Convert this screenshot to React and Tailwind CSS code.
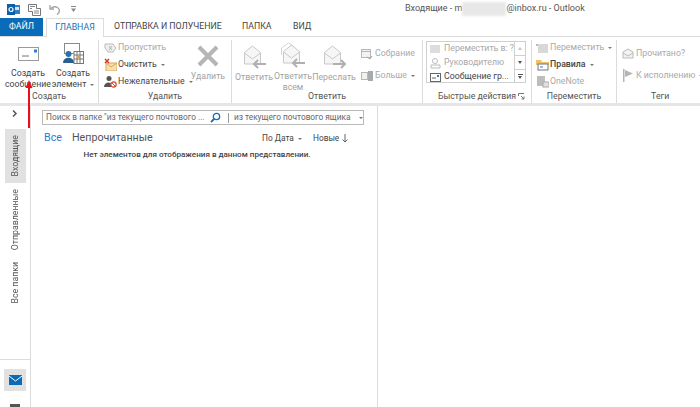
import React from 'react';

const EnvelopeOpen = ({ arrow = 'left', double = false }) => (
    <svg width="26" height="28" viewBox="0 0 26 28" fill="none">
        {double && <path d="M1.500 13V6l7-5 5 3" stroke="#d4d4d4" />}
        <path d="M3.500 9.500 11.500 3l8 6.500V21h-16z" fill="#f6f6f6" stroke="#c8c8c8" />
        <path d="M3.500 10l8 6 8-6" stroke="#c8c8c8" />
        {arrow === 'left' ? (
            <path d="M25 21H13M17 17l-4 4 4 4" stroke="#b0b0b0" strokeWidth="2" />
        ) : (
            <path d="M12 21h12M20 17l4 4-4 4" stroke="#b0b0b0" strokeWidth="2" />
        )}
    </svg>
);

const Caret = ({ className = '' }) => <span className={`inline-block ml-1 align-middle border-x-[2px] border-t-[2px] border-x-transparent border-t-[#777] ${className}`} />;

const SmallRow = ({ icon, label, caret, muted }) => (
    <div className={`flex items-center h-[17px] whitespace-nowrap ${muted ? 'text-[#a9a9a9]' : 'text-[#444]'}`}>
        <span className="flex w-[14px] h-[14px] shrink-0 items-center justify-start">{icon}</span>
        <span>{label}</span>
        {caret && <Caret />}
    </div>
);

const Group = ({ label, className, children, launcher }) => (
    <div className={`relative flex flex-col h-full shrink-0 border-r border-[#dcdcdc] ${className}`}>
        <div className="flex-1 flex min-h-0">{children}</div>
        <div className="h-[13px] leading-[13px] text-center text-[#555]">{label}</div>
        {launcher && (
            <svg className="absolute right-[6px] bottom-[3px]" width="7" height="7" viewBox="0 0 7 7" fill="none">
                <path d="M.5 3V.5H6M3 3l3 3M6 3.500V6H3.500" stroke="#777" />
            </svg>
        )}
    </div>
);

const BigButton = ({ icon, lines, muted, className = '' }) => (
    <div className={`flex flex-col items-center shrink-0 ${muted ? 'text-[#a3a3a3]' : 'text-[#444]'} ${className}`}>
        <div className="h-[29px] flex items-center justify-center">{icon}</div>
        <div className="leading-[12px] text-center whitespace-nowrap">{lines[0]}</div>
        <div className="leading-[11px] text-center whitespace-nowrap">{lines[1]}</div>
    </div>
);

const SideTab = ({ label, active, className = '' }) => (
    <div className={`flex items-center justify-center w-[21px] ${active ? 'bg-[#e1e1e1]' : ''} ${className}`}>
        <span className="[writing-mode:vertical-rl] rotate-180 whitespace-nowrap text-[#555]">{label}</span>
    </div>
);

export default function App() {
    return (
        <div className="w-[700px] h-[407px] overflow-hidden bg-white relative font-['Roboto',sans-serif] text-[8.75px] text-[#444] flex flex-col">
            {/* Title bar */}
            <div className="h-[18px] flex items-center shrink-0">
                <div className="w-[405px] flex items-center gap-[8px] pl-[7px]">
                    <svg width="13" height="13" viewBox="0 0 13 13">
                        <rect x="5" y="2" width="8" height="9" fill="#2f7fc4" />
                        <rect x="0" y="1" width="8" height="11" fill="#0f5fa8" />
                        <circle cx="4" cy="6.500" r="2" fill="none" stroke="#fff" strokeWidth="1.200" />
                        <path d="M8 4h4v3H8z" fill="#cfe4f5" />
                    </svg>
                    <svg width="13" height="13" viewBox="0 0 13 13" fill="none">
                        <path d="M.5 1.500h8v4h4v7h-8v-4h-4z" fill="#fff" stroke="#777" />
                        <path d="M2 3.500h5M2 5.500h2M6 8h5M6 10h5" stroke="#888" />
                    </svg>
                    <svg width="11" height="11" viewBox="0 0 11 11" fill="none">
                        <path d="M1 1v4h4M1.500 5C3 2.500 8 1.500 10 5c1 2.500-.5 4.500-2 5.500" stroke="#a6a6a6" strokeWidth="1.300" />
                    </svg>
                    <svg className="ml-[3px]" width="5" height="6" viewBox="0 0 5 6">
                        <path d="M0 0h5v1H0zM0 2.500h5L2.500 6z" fill="#888" />
                    </svg>
                </div>
                <div className="h-[18px] flex items-center text-[9px] text-[#555] whitespace-nowrap">
                    <span>Входящие - m</span>
                    <span className="w-[44px] h-[14px] bg-[#e8e8e8] blur-[1px]" />
                    <span>@inbox.ru - Outlook</span>
                </div>
            </div>

            {/* Tabs */}
            <div className="h-[18px] flex items-stretch shrink-0 text-[#444] relative z-10">
                <div className="w-[43px] bg-[#0a6cb8] text-white flex items-center justify-center">ФАЙЛ</div>
                <div className="w-[58px] ml-[3px] h-[19px] bg-white border border-b-0 border-[#dcdcdc] text-[#1d6fb4] flex items-center justify-center">ГЛАВНАЯ</div>
                <div className="w-[128px] ml-[10px] flex items-center whitespace-nowrap">ОТПРАВКА И ПОЛУЧЕНИЕ</div>
                <div className="w-[51px] flex items-center">ПАПКА</div>
                <div className="flex items-center">ВИД</div>
            </div>

            {/* Ribbon */}
            <div className="h-[67px] flex shrink-0 border-t border-[#dcdcdc] pt-[3px]">
                <Group label="Создать" className="w-[99px]">
                    <div className="flex pl-[3px]">
                        <BigButton
                            className="w-[50px] pt-[1px]"
                            lines={['Создать', 'сообщение']}
                            icon={
                                <svg width="24" height="18" viewBox="0 0 24 18" fill="none">
                                    <rect x="2.500" y="2.500" width="20" height="13" fill="#fff" stroke="#9a9a9a" />
                                    <path d="M6 11h7" stroke="#777" />
                                    <rect x="18" y="4.500" width="3" height="3" fill="#2b7cd3" />
                                </svg>
                            }
                        />
                        <BigButton
                            className="w-[40px] pt-[1px]"
                            lines={['Создать', <>элемент<Caret /></>]}
                            icon={
                                <svg width="22" height="22" viewBox="0 0 22 22" fill="none">
                                    <rect x="2.500" y=".5" width="15" height="10" fill="#fff" stroke="#8a8a8a" />
                                    <rect x="12" y="8.500" width="9.500" height="12" fill="#fff" stroke="#777" />
                                    <path d="M12 12h10M12 16h10M15 9v12M18 9v12" stroke="#777" />
                                    <rect x="15.500" y="12.500" width="2.500" height="3" fill="#e59a3c" />
                                    <circle cx="6.500" cy="11" r="3" fill="#2f6fa8" />
                                    <path d="M1 20c0-7 11-7 11 0z" fill="#2c5f8f" />
                                </svg>
                            }
                        />
                    </div>
                </Group>
                <Group label="Удалить" className="w-[133px]">
                    <div className="flex flex-col pl-[5px] -mt-[1px] w-[91px]">
                        <SmallRow
                            muted
                            label="Пропустить"
                            icon={
                                <svg width="13" height="13" viewBox="0 0 13 13" fill="none">
                                    <path d="M1 3h8l3 4-3 4H4L1 7z" fill="#f0f0f0" stroke="#b9b9b9" />
                                    <path d="M5 5l3 4M8 5 5 9" stroke="#b0b0b0" />
                                </svg>
                            }
                        />
                        <SmallRow
                            label="Очистить"
                            caret
                            icon={
                                <svg width="13" height="13" viewBox="0 0 13 13" fill="none">
                                    <rect x="2" y="5" width="11" height="8" fill="#f7dfb0" stroke="#d8a95c" />
                                    <path d="M1 1l4 4M5 1 1 5" stroke="#d13a2a" strokeWidth="1.500" />
                                    <path d="M2 5l5 4 6-4" stroke="#d8a95c" />
                                </svg>
                            }
                        />
                        <SmallRow
                            label="Нежелательные"
                            caret
                            icon={
                                <svg width="13" height="13" viewBox="0 0 13 13" fill="none">
                                    <circle cx="5" cy="3.500" r="2.500" fill="#555" />
                                    <path d="M0 12c0-6 9-6 9 0z" fill="#555" />
                                    <circle cx="9.500" cy="9.500" r="2.700" fill="#fff" stroke="#d8452f" strokeWidth="1.200" />
                                    <path d="M7.500 7.500l4 4" stroke="#d8452f" />
                                </svg>
                            }
                        />
                    </div>
                    <BigButton
                        muted
                        className="w-[36px] pt-[1px]"
                        lines={['Удалить', '']}
                        icon={
                            <svg width="24" height="24" viewBox="0 0 24 24" fill="none">
                                <path d="M3 3l18 18M21 3 3 21" stroke="#b5b5b5" strokeWidth="4" />
                            </svg>
                        }
                    />
                </Group>
                <Group label="Ответить" className="w-[191px]">
                    <div className="flex pl-[3px] pt-[2px] shrink-0">
                        <BigButton muted className="w-[38px]" lines={['Ответить', '']} icon={<EnvelopeOpen />} />
                        <BigButton muted className="w-[40px]" lines={['Ответить', 'всем']} icon={<EnvelopeOpen double />} />
                        <BigButton muted className="w-[42px]" lines={['Переслать', '']} icon={<EnvelopeOpen arrow="right" />} />
                    </div>
                    <div className="flex flex-col pl-[6px] pt-[5px] gap-[5px] text-[#a3a3a3]">
                        <SmallRow
                            muted
                            label="Собрание"
                            icon={
                                <svg width="12" height="12" viewBox="0 0 12 12" fill="none">
                                    <rect x=".5" y="1.500" width="9" height="8" fill="#f2f2f2" stroke="#b7b7b7" />
                                    <path d="M.5 3.500h9" stroke="#b7b7b7" />
                                    <path d="M6 9l3 2 2-3" stroke="#a5a5a5" />
                                </svg>
                            }
                        />
                        <SmallRow
                            muted
                            label="Больше"
                            caret
                            icon={
                                <svg width="12" height="12" viewBox="0 0 12 12" fill="none">
                                    <rect x=".5" y="2.500" width="6" height="7" fill="#f2f2f2" stroke="#b7b7b7" />
                                    <rect x="7" y="1" width="5" height="10" fill="#aaa" />
                                </svg>
                            }
                        />
                    </div>
                </Group>
                <Group label="Быстрые действия" launcher className="w-[109px]">
                    <div className="ml-[3px] mt-[1px] h-[42px] w-[100px] flex border border-[#d0d0d0]">
                        <div className="w-[87px] flex flex-col pl-[3px]">
                            <div className="h-[14px] flex items-center"><SmallRow muted label="Переместить в: ?" icon={<span className="w-[10px] h-[8px] bg-[#ddd]" />} /></div>
                            <div className="h-[14px] flex items-center"><SmallRow muted label="Руководителю" icon={<svg width="11" height="11" viewBox="0 0 11 11" fill="none"><circle cx="5" cy="3" r="2.500" stroke="#bbb" /><path d="M1 10V7h9v3z" stroke="#bbb" /></svg>} /></div>
                            <div className="h-[14px] flex items-center"><SmallRow label="Сообщение гр..." icon={<svg width="11" height="9" viewBox="0 0 11 9" fill="none"><rect x=".5" y=".5" width="10" height="8" stroke="#666" /><path d="M2 5h4" stroke="#666" /><rect x="7" y="2" width="2" height="2" fill="#2b7cd3" /></svg>} /></div>
                        </div>
                        <div className="flex-1 flex flex-col border-l border-[#d0d0d0] text-[#777]">
                            <div className="h-[14px] flex items-center justify-center border-b border-[#d0d0d0]"><span className="border-x-[2px] border-b-[3px] border-x-transparent border-b-[#c4c4c4]" /></div>
                            <div className="h-[14px] flex items-center justify-center border-b border-[#d0d0d0]"><span className="border-x-[2px] border-t-[3px] border-x-transparent border-t-[#555]" /></div>
                            <div className="flex-1 flex flex-col items-center justify-center gap-[1px]"><span className="w-[5px] h-px bg-[#555]" /><span className="border-x-[2px] border-t-[3px] border-x-transparent border-t-[#555]" /></div>
                        </div>
                    </div>
                </Group>
                <Group label="Переместить" className="w-[85px]">
                    <div className="flex flex-col pl-[4px] -mt-[1px]">
                        <SmallRow muted label="Переместить" caret icon={<svg width="13" height="13" viewBox="0 0 13 13"><path d="M0 3h3v2H0z" fill="#bbb" /><rect x="2" y="3" width="10" height="9" fill="#d8d8d8" /></svg>} />
                        <SmallRow
                            label={<b className="font-medium">Правила</b>}
                            caret
                            icon={
                                <svg width="13" height="13" viewBox="0 0 13 13" fill="none">
                                    <path d="M0 2h5l1 2h7v3H0z" fill="#f3c066" />
                                    <rect x="2" y="6" width="10" height="6" fill="#fff" stroke="#777" />
                                    <path d="M4 9h3" stroke="#2b7cd3" />
                                </svg>
                            }
                        />
                        <SmallRow
                            muted
                            label="OneNote"
                            icon={
                                <svg width="13" height="13" viewBox="0 0 13 13">
                                    <rect x="1" y="1" width="8" height="10" fill="#bdbdbd" />
                                    <rect x="7" y="7" width="6" height="5" fill="#e0e0e0" stroke="#aaa" />
                                </svg>
                            }
                        />
                    </div>
                </Group>
                <Group label="Теги" className="flex-1 border-r-0">
                    <div className="flex flex-col pl-[5px] pt-[5px] gap-[5px]">
                        <SmallRow
                            muted
                            label="Прочитано?"
                            icon={
                                <svg width="12" height="11" viewBox="0 0 12 11" fill="none">
                                    <path d="M1 4l5-3 5 3v6H1z" fill="#f3f3f3" stroke="#bbb" />
                                    <path d="M1 5l5 3 5-3" stroke="#bbb" />
                                </svg>
                            }
                        />
                        <SmallRow
                            muted
                            label="К исполнению"
                            caret
                            icon={
                                <svg width="12" height="13" viewBox="0 0 12 13">
                                    <path d="M1 0h1.500v13H1zM3 1l8 3.500L3 8z" fill="#b5b5b5" />
                                </svg>
                            }
                        />
                    </div>
                </Group>
            </div>

            {/* Gray strip under the ribbon */}
            <div className="h-[3px] bg-[#e6e6e6] shrink-0" />

            {/* Body */}
            <div className="flex-1 flex min-h-0">
                {/* Left rail */}
                <div className="w-[31px] border-r border-[#dcdcdc] flex flex-col shrink-0">
                    <div className="h-[23px] flex items-center justify-center pr-[1px] pb-[7px]">
                        <svg width="6" height="7" viewBox="0 0 6 7" fill="none">
                            <path d="M1 .5 4 3.500 1 6.500" stroke="#555" strokeWidth="1.500" />
                        </svg>
                    </div>
                    <div className="h-[232px] flex flex-col items-start pl-[5px] border-b border-[#dcdcdc]">
                        <SideTab label="Входящие" active className="h-[54px]" />
                        <SideTab label="Отправленные" className="h-[58px] mt-[8px]" />
                        <SideTab label="Все папки" className="h-[40px] mt-[14px]" />
                    </div>
                    <div className="pl-[4px] pt-[9px]">
                        <div className="w-[22px] h-[22px] bg-[#e1e1e1] flex items-center justify-center">
                            <svg width="13" height="10" viewBox="0 0 13 10">
                                <rect width="13" height="10" fill="#0a6cb8" />
                                <path d="M0 1l6.500 5L13 1" fill="none" stroke="#fff" />
                            </svg>
                        </div>
                        <div className="ml-[6px] mt-[13px] w-[10px] h-[3px] bg-[#555]" />
                    </div>
                </div>

                {/* Message list */}
                <div className="w-[347px] border-r border-[#dcdcdc] shrink-0 px-[11px] pt-[4px]">
                    <div className="h-[15px] w-[322px] border border-[#b9b9b9] flex items-center text-[8.3px] text-[#666] whitespace-nowrap">
                        <span className="w-[167px] pl-[3px]">Поиск в папке "из текущего почтового ...</span>
                        <svg width="11" height="11" viewBox="0 0 11 11" fill="none">
                            <circle cx="6.500" cy="4.500" r="3.200" stroke="#1d6fb4" strokeWidth="1.300" />
                            <path d="M4 7 1 10" stroke="#1d6fb4" strokeWidth="1.800" />
                        </svg>
                        <span className="ml-[7px] h-[10px] w-px bg-[#999]" />
                        <span className="ml-[5px] w-[121px]">из текущего почтового ящика</span>
                        <Caret />
                    </div>
                    <div className="flex items-center h-[18px] mt-[4px] pl-[2px] whitespace-nowrap">
                        <span className="w-[28px] text-[10.7px] text-[#2b7cd3]">Все</span>
                        <span className="w-[190px] text-[10.7px] text-[#555]">Непрочитанные</span>
                        <span className="w-[51px] text-[8.3px]">По Дата<Caret /></span>
                        <span className="w-[29px] text-[8.3px]">Новые</span>
                        <svg width="6" height="9" viewBox="0 0 6 9" fill="none">
                            <path d="M3 0v8M.5 5.500 3 8l2.500-2.500" stroke="#666" />
                        </svg>
                    </div>
                    <div className="text-center text-[8.1px] font-medium text-[#444] mt-[1px] pr-[14px] whitespace-nowrap">Нет элементов для отображения в данном представлении.</div>
                </div>
                <div className="flex-1" />
            </div>

            {/* Red annotation arrow */}
            <svg className="absolute left-[25px] top-[78px]" width="8" height="50" viewBox="0 0 8 50">
                <path d="M4 4v46" stroke="#e8101c" strokeWidth="2" />
                <path d="M4 2 7.500 10H.5z" fill="#e8101c" />
            </svg>
        </div>
    );
}
